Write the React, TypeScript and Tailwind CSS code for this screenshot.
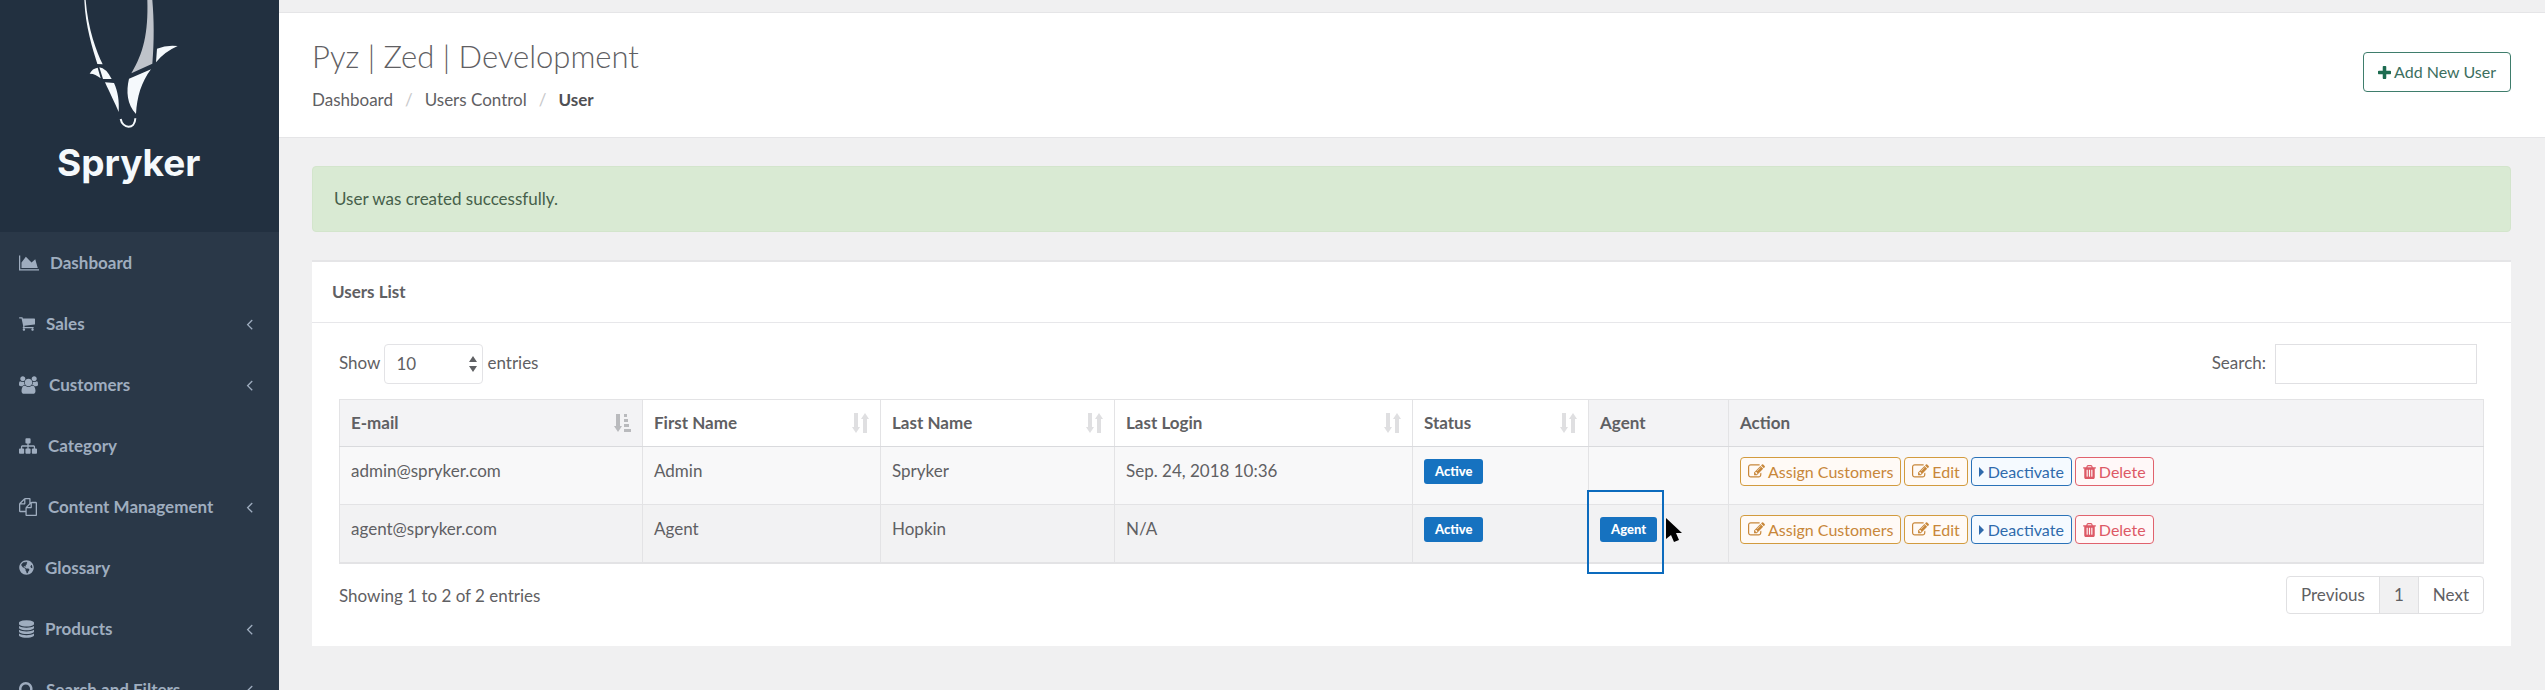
import { Fragment, type ReactNode } from "react";
import { FaGlobeAmericas } from "react-icons/fa";

const paths = {
  area: "M2048 1536v128h-2048v-1536h128v1408h1920zm-384-1024l256 896h-1664v-576l448-576 576 576z",
  cart: "M704 1536q0 52-38 90t-90 38-90-38-38-90 38-90 90-38 90 38 38 90zm896 0q0 52-38 90t-90 38-90-38-38-90 38-90 90-38 90 38 38 90zm128-1088v512q0 24-16.5 42.5t-40.5 21.5l-1044 122q13 60 13 70 0 16-24 64h920q26 0 45 19t19 45-19 45-45 19h-1024q-26 0-45-19t-19-45q0-11 8-31.5t16-36 21.5-40 15.5-29.5l-177-823h-204q-26 0-45-19t-19-45 19-45 45-19h256q16 0 28.5 6.5t19.5 15.5 13 24.5 8 26 5.5 29.5 4.5 26h1201q26 0 45 19t19 45z",
  users: "M593 896q-162 5-265 128h-134q-82 0-138-40.5t-56-118.5q0-353 124-353 6 0 43.5 21t97.5 42.5 119 21.5q67 0 133-23-5 37-5 66 0 139 81 256zm1071 637q0 120-73 189.5t-194 69.5h-874q-121 0-194-69.5t-73-189.5q0-53 3.5-103.5t14-109 26.5-108.5 43-97.5 62-81 85.5-53.5 111.5-20q10 0 43 21.5t73 48 107 48 135 21.5 135-21.5 107-48 73-48 43-21.5q61 0 111.5 20t85.5 53.5 62 81 43 97.5 26.5 108.5 14 109 3.5 103.5zm-1024-1277q0 106-75 181t-181 75-181-75-75-181 75-181 181-75 181 75 75 181zm704 384q0 159-112.5 271.5t-271.5 112.5-271.5-112.5-112.5-271.5 112.5-271.5 271.5-112.5 271.5 112.5 112.5 271.5zm576 225q0 78-56 118.5t-138 40.5h-134q-103-123-265-128 81-117 81-256 0-29-5-66 66 23 133 23 59 0 119-21.5t97.5-42.5 43.5-21q124 0 124 353zm-128-609q0 106-75 181t-181 75-181-75-75-181 75-181 181-75 181 75 75 181z",
  sitemap: "M1792 1248v320q0 40-28 68t-68 28h-320q-40 0-68-28t-28-68v-320q0-40 28-68t68-28h96v-192h-512v192h96q40 0 68 28t28 68v320q0 40-28 68t-68 28h-320q-40 0-68-28t-28-68v-320q0-40 28-68t68-28h96v-192h-512v192h96q40 0 68 28t28 68v320q0 40-28 68t-68 28h-320q-40 0-68-28t-28-68v-320q0-40 28-68t68-28h96v-192q0-52 38-90t90-38h512v-192h-96q-40 0-68-28t-28-68v-320q0-40 28-68t68-28h320q40 0 68 28t28 68v320q0 40-28 68t-68 28h-96v192h512q52 0 90 38t38 90v192h96q40 0 68 28t28 68z",
  files: "M1696 384q40 0 68 28t28 68v1216q0 40-28 68t-68 28h-960q-40 0-68-28t-28-68v-288h-544q-40 0-68-28t-28-68v-672q0-40 20-88t48-76l408-408q28-28 76-48t88-20h416q40 0 68 28t28 68v328q68-40 128-40h416zm-544 213l-299 299h299v-299zm-640-384l-299 299h299v-299zm196 647l316-316v-416h-384v416q0 40-28 68t-68 28h-416v640h512v-256q0-40 20-88t48-76zm956 804v-1152h-384v416q0 40-28 68t-68 28h-416v640h896z",
  database: "M896 768q237 0 443-43t325-127v170q0 69-103 128t-280 93.5-385 34.5-385-34.5-280-93.5-103-128v-170q119 84 325 127t443 43zm0 768q237 0 443-43t325-127v170q0 69-103 128t-280 93.5-385 34.5-385-34.5-280-93.5-103-128v-170q119 84 325 127t443 43zm0-384q237 0 443-43t325-127v170q0 69-103 128t-280 93.5-385 34.5-385-34.5-280-93.5-103-128v-170q119 84 325 127t443 43zm0-1152q208 0 385 34.5t280 93.5 103 128v128q0 69-103 128t-280 93.5-385 34.5-385-34.5-280-93.5-103-128v-128q0-69 103-128t280-93.5 385-34.5z",
  search: "M1216 832q0-185-131.500-316.500t-316.500-131.500-316.500 131.500-131.500 316.500 131.500 316.500 316.500 131.500 316.500-131.500 131.500-316.500zm512 832q0 52-38 90t-90 38q-54 0-90-38l-343-342q-179 124-399 124-143 0-273.500-55.500t-225-150-150-225-55.500-273.500 55.500-273.500 150-225 225-150 273.500-55.500 273.500 55.500 225 150 150 225 55.500 273.500q0 220-124 399l343 343q37 37 37 90z",
  angleLeft: "M1203 544q0 13-10 23l-393 393 393 393q10 10 10 23t-10 23l-50 50q-10 10-23 10t-23-10l-466-466q-10-10-10-23t10-23l466-466q10-10 23-10t23 10l50 50q10 10 10 23z",
  pencil: "M888 1184l116-116-152-152-116 116v56h96v96h56zm440-720q-16-16-33 1l-350 350q-17 17-1 33t33-1l350-350q17-17 1-33zm80 594v190q0 119-84.5 203.5t-203.5 84.5h-832q-119 0-203.500-84.500t-84.500-203.500v-832q0-119 84.500-203.500t203.500-84.500h832q63 0 117 25 15 7 18 23 3 17-9 29l-49 49q-14 14-32 8-23-6-45-6h-832q-66 0-113 47t-47 113v832q0 66 47 113t113 47h832q66 0 113-47t47-113v-126q0-13 9-22l64-64q15-15 35-7t20 29zm-96-738l288 288-672 672h-288v-288zm444 132l-92 92-288-288 92-92q28-28 68-28t68 28l152 152q28 28 28 68t-28 68z",
  trash: "M704 1376v-704q0-14-9-23t-23-9h-64q-14 0-23 9t-9 23v704q0 14 9 23t23 9h64q14 0 23-9t9-23zm256 0v-704q0-14-9-23t-23-9h-64q-14 0-23 9t-9 23v704q0 14 9 23t23 9h64q14 0 23-9t9-23zm256 0v-704q0-14-9-23t-23-9h-64q-14 0-23 9t-9 23v704q0 14 9 23t23 9h64q14 0 23-9t9-23zm-544-992h448l-48-117q-7-9-17-11h-317q-10 2-17 11zm928 32v64q0 14-9 23t-23 9h-96v948q0 83-47 143.5t-113 60.5h-832q-66 0-113-58.5t-47-141.500v-952h-96q-14 0-23-9t-9-23v-64q0-14 9-23t23-9h309l70-167q15-37 54-63t79-26h320q40 0 79 26t54 63l70 167h309q14 0 23 9t9 23z",
  plus: "M1600 736v192q0 40-28 68t-68 28h-416v416q0 40-28 68t-68 28h-192q-40 0-68-28t-28-68v-416h-416q-40 0-68-28t-28-68v-192q0-40 28-68t68-28h416v-416q0-40 28-68t68-28h192q40 0 68 28t28 68v416h416q40 0 68 28t28 68z",
};

function Icon({ d, box, className }: { d: string; box: string; className: string }) {
  return (
    <svg viewBox={box} className={`shrink-0 fill-current ${className}`} aria-hidden="true">
      <path d={d} />
    </svg>
  );
}

const menu: { label: string; icon: ReactNode; sub?: boolean }[] = [
  { label: "Dashboard", icon: <Icon d={paths.area} box="0 0 2048 1792" className="w-5 h-[18px]" /> },
  { label: "Sales", icon: <Icon d={paths.cart} box="64 128 1664 1664" className="w-4 h-4" />, sub: true },
  { label: "Customers", icon: <Icon d={paths.users} box="0 0 1920 1792" className="w-[19px] h-[18px]" />, sub: true },
  { label: "Category", icon: <Icon d={paths.sitemap} box="0 0 1792 1792" className="w-[18px] h-[18px]" /> },
  { label: "Content Management", icon: <Icon d={paths.files} box="0 0 1792 1792" className="w-[18px] h-[18px]" />, sub: true },
  { label: "Glossary", icon: <FaGlobeAmericas className="w-[15px] h-[15px] shrink-0" aria-hidden="true" /> },
  { label: "Products", icon: <Icon d={paths.database} box="128 0 1536 1792" className="w-[15px] h-[18px]" />, sub: true },
  { label: "Search and Filters", icon: <Icon d={paths.search} box="64 128 1664 1664" className="w-4 h-4" />, sub: true },
];

function Sidebar() {
  return (
    <aside className="w-[279px] shrink-0 overflow-hidden bg-[#2a3848] text-[#9fadbf]">
      <div className="flex h-[232px] flex-col bg-[#223040] text-[#f5f9fc]">
        <svg viewBox="249 0 288 390" className="ml-[83px] h-[130px] w-[96px]" aria-hidden="true">
          <g fill="#f5f9fc">
            <path d="M253 0C256 80 278 145 292 192L308 193C290 155 264 90 257 0Z" />
            <path d="M269 221Q277 205 293 203L302 235Q285 220 269 221Z" />
            <path d="M298 202Q318 204 335 237L309 237Z" />
            <path d="M315 247L342 249C354 275 358 305 356 336C346 312 329 278 315 247Z" />
            <path d="M471 146Q500 134 533 138Q492 156 468 187Z" />
            <path d="M387 236L453 208C424 246 411 290 408 342C381 312 378 275 387 236Z" />
          </g>
          <path d="M442 0H457C462 60 463 120 457 191L394 220C430 160 445 100 442 0Z" fill="#bfc3ca" />
          <path d="M362 357C367 386 405 390 406 355" fill="none" stroke="#f5f9fc" strokeWidth="6" />
        </svg>
        <div className="pl-[57px] pt-[10px] font-[Inter,sans-serif] text-[37px] font-bold leading-[46px]">Spryker</div>
      </div>
      <nav>
        <ul>
          {menu.map((m) => (
            <li key={m.label}>
              <a href="#" className="flex h-[61px] items-center pl-[19px] pr-[26px] font-bold">
                {m.icon}
                <span className="ml-[11px]">{m.label}</span>
                {m.sub && <Icon d={paths.angleLeft} box="576 0 640 1792" className="ml-auto h-[18px] w-[7px]" />}
              </a>
            </li>
          ))}
        </ul>
      </nav>
    </aside>
  );
}

function SortIcon({ active }: { active?: boolean }) {
  return active ? (
    <svg viewBox="0 0 17 18" className="h-[18px] w-[17px] shrink-0 fill-[#b9babd]" aria-hidden="true">
      <path d="M2 0h4v12h2l-4 6-4-6h2zM10 0h3v3h-3zM10 5h4v3h-4zM10 10h5v3h-5zM10 15h7v3h-7z" />
    </svg>
  ) : (
    <svg viewBox="0 0 17 20" className="h-5 w-[17px] shrink-0 fill-[#dfdfe1]" aria-hidden="true">
      <path d="M2 0h4v14h2l-4 6-4-6h2zM11 20h4V6h2l-4-6-4 6h2z" />
    </svg>
  );
}

function Tag({ children }: { children: ReactNode }) {
  return (
    <span className="inline-block rounded-[3px] bg-[#1672c0] px-[11px] text-[13px] font-black leading-[25px] text-white">
      {children}
    </span>
  );
}

function Action({ tone, icon, children }: { tone: string; icon: ReactNode; children: ReactNode }) {
  return (
    <button type="button" className={`flex h-[29px] items-center gap-[3px] rounded-[4px] border px-[7px] text-base ${tone}`}>
      {icon}
      {children}
    </button>
  );
}

const columns = [
  { name: "E-mail", width: "w-[303px]", sort: "active" },
  { name: "First Name", width: "w-[238px]", sort: "idle" },
  { name: "Last Name", width: "w-[234px]", sort: "idle" },
  { name: "Last Login", width: "w-[298px]", sort: "idle" },
  { name: "Status", width: "w-[176px]", sort: "idle" },
  { name: "Agent", width: "w-[140px]", sort: "" },
  { name: "Action", width: "", sort: "" },
];

const users = [
  { email: "admin@spryker.com", first: "Admin", last: "Spryker", login: "Sep. 24, 2018 10:36", agent: false },
  { email: "agent@spryker.com", first: "Agent", last: "Hopkin", login: "N/A", agent: true },
];

function Pointer() {
  return (
    <svg viewBox="0 0 16 25" className="absolute left-[77px] top-[13px] h-[25px] w-4" aria-hidden="true">
      <path d="M0 0L16 15H10L13 22L8 24L5 17L0 21Z" fill="#000" />
    </svg>
  );
}

function UsersTable() {
  const cell = "border border-[#e3e3e5] pl-[11px] pr-[11px]";
  return (
    <table className="w-full table-fixed border-collapse border-b-2 border-[#e3e3e5] text-left">
      <colgroup>
        {columns.map((c) => (
          <col key={c.name} className={c.width} />
        ))}
      </colgroup>
      <thead>
        <tr className="h-[47px]">
          {columns.map((c) => (
            <th key={c.name} scope="col" className={`${cell} border-b-[#d9dadd] ${c.sort === "idle" ? "bg-white" : "bg-[#f3f3f5]"}`}>
              <div className="flex items-center justify-between">
                {c.name}
                {c.sort && <SortIcon active={c.sort === "active"} />}
              </div>
            </th>
          ))}
        </tr>
      </thead>
      <tbody className="align-top">
        {users.map((u) => (
          <tr key={u.email} className="h-[58px] odd:bg-[#f8f8f9] even:bg-[#f2f2f3]">
            {[u.email, u.first, u.last, u.login].map((t) => (
              <td key={t} className={`${cell} pt-3`}>{t}</td>
            ))}
            <td className={`${cell} pt-[11px]`}>
              <Tag>Active</Tag>
            </td>
            <td className={`${cell} relative pt-[11px]`}>
              {u.agent && (
                <Fragment>
                  <Tag>Agent</Tag>
                  <div className="absolute -left-0.5 -top-[15px] h-[84px] w-[77px] border-2 border-[#0c6bbd]" />
                  <Pointer />
                </Fragment>
              )}
            </td>
            <td className={`${cell} pt-[10px]`}>
              <div className="flex gap-[3px]">
                <Action tone="border-[#d29b3e] bg-[#fffaf6] text-[#c8873a]" icon={<Icon d={paths.pencil} box="0 0 1792 1792" className="h-[17px] w-[17px]" />}>
                  Assign Customers
                </Action>
                <Action tone="border-[#d29b3e] bg-[#fffaf6] text-[#c8873a]" icon={<Icon d={paths.pencil} box="0 0 1792 1792" className="h-[17px] w-[17px]" />}>
                  Edit
                </Action>
                <Action tone="border-[#2a72b8] bg-[#f5faff] text-[#2f6aac]" icon={<Icon d="M0 0L5 5L0 10Z" box="0 0 5 10" className="mr-px h-[10px] w-[5px]" />}>
                  Deactivate
                </Action>
                <Action tone="border-[#e0626d] bg-[#fff8f8] text-[#dd5966]" icon={<Icon d={paths.trash} box="192 128 1408 1536" className="h-[14px] w-[13px]" />}>
                  Delete
                </Action>
              </div>
            </td>
          </tr>
        ))}
      </tbody>
    </table>
  );
}

export default function App() {
  return (
    <div className="flex h-screen overflow-hidden bg-[#f0f0f1] font-[Lato,sans-serif] text-[17px] leading-6 text-[#5f6063]">
      <Sidebar />
      <div className="min-w-0 flex-1 pt-3">
        <header className="flex items-start justify-between border-y border-[#e5e5e7] bg-white pb-6 pl-[33px] pr-[34px] pt-5">
          <div>
            <h1 className="text-[31px] font-light leading-[46px]">Pyz | Zed | Development</h1>
            <nav aria-label="Breadcrumb" className="flex pt-2 leading-[26px]">
              <a href="#">Dashboard</a>
              <span className="px-3 text-[#c8c8ca]">/</span>
              <a href="#">Users Control</a>
              <span className="px-3 text-[#c8c8ca]">/</span>
              <strong className="text-[#4f5054]">User</strong>
            </nav>
          </div>
          <button type="button" className="mt-[19px] flex h-10 items-center gap-[3px] rounded-[4px] border border-[#3f7d6c] px-[14px] text-base text-[#3c6f60]">
            <Icon d={paths.plus} box="192 128 1408 1408" className="h-[13px] w-[13px] text-[#1d6b50]" />
            Add New User
          </button>
        </header>
        <main className="pl-[33px] pr-[34px] pt-7">
          <div role="status" className="rounded-[4px] border border-[#d3e5cc] bg-[#d9ead3] px-[21px] py-5 text-[#46604a]">
            User was created successfully.
          </div>
          <section className="mt-7 border-t-2 border-[#e5e5e7] bg-white pb-8">
            <h2 className="border-b border-[#e7e7ea] px-5 py-[18px] font-bold">Users List</h2>
            <div className="px-[27px] pt-[21px]">
              <div className="flex items-start justify-between">
                <label className="flex items-start leading-[38px]">
                  Show
                  <span className="relative mx-1 flex">
                    <select className="h-10 w-[99px] appearance-none rounded-[4px] border border-[#e3e3e6] bg-white pl-[11px]" defaultValue="10">
                      <option>10</option>
                      <option>25</option>
                    </select>
                    <svg viewBox="0 0 8 16" className="pointer-events-none absolute right-[6px] top-3 h-4 w-2 fill-current" aria-hidden="true">
                      <path d="M0 6L4 0L8 6ZM0 10L4 16L8 10Z" />
                    </svg>
                  </span>
                  entries
                </label>
                <label className="flex items-start pr-[7px] leading-[38px]">
                  Search:
                  <input type="search" className="ml-[9px] h-10 w-[202px] border border-[#e0e0e3] bg-white px-2" />
                </label>
              </div>
              <div className="pt-[15px]">
                <UsersTable />
              </div>
              <div className="flex items-start justify-between pt-3">
                <p className="pt-2">Showing 1 to 2 of 2 entries</p>
                <div className="flex divide-x divide-[#e0e0e2] overflow-hidden rounded-[4px] border border-[#e0e0e2] leading-9">
                  <button type="button" className="px-[14px]">Previous</button>
                  <button type="button" className="bg-[#f1f1f2] px-[14px]">1</button>
                  <button type="button" className="px-[14px]">Next</button>
                </div>
              </div>
            </div>
          </section>
        </main>
      </div>
    </div>
  );
}
